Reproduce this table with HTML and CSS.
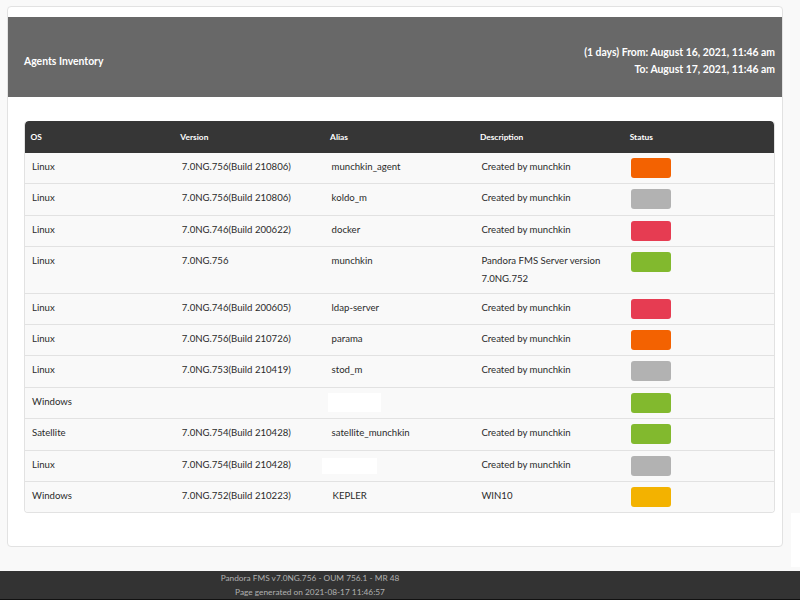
FILE: index.html
```html
<!DOCTYPE html>
<html>
<head>
<meta charset="utf-8">
<link rel="stylesheet" href="styles.css">
</head>
<body>
<div class="page">
  <div class="report">
    <div class="report-head">
      <div class="title">Agents Inventory</div>
      <div class="period">
        <div>(1 days) From: August 16, 2021, 11:46 am</div>
        <div>To: August 17, 2021, 11:46 am</div>
      </div>
    </div>
    <div class="table-area">
      <table class="inv">
        <thead>
          <tr><th>OS</th><th>Version</th><th>Alias</th><th>Description</th><th>Status</th></tr>
        </thead>
        <tbody>
          <tr><td>Linux</td><td>7.0NG.756(Build 210806)</td><td>munchkin_agent</td><td>Created by munchkin</td><td><span class="st orange"></span></td></tr>
          <tr><td>Linux</td><td>7.0NG.756(Build 210806)</td><td>koldo_m</td><td>Created by munchkin</td><td><span class="st gray"></span></td></tr>
          <tr><td>Linux</td><td>7.0NG.746(Build 200622)</td><td>docker</td><td>Created by munchkin</td><td><span class="st red"></span></td></tr>
          <tr><td>Linux</td><td>7.0NG.756</td><td>munchkin</td><td>Pandora FMS Server version 7.0NG.752</td><td><span class="st green"></span></td></tr>
          <tr><td>Linux</td><td>7.0NG.746(Build 200605)</td><td>ldap-server</td><td>Created by munchkin</td><td><span class="st red"></span></td></tr>
          <tr><td>Linux</td><td>7.0NG.756(Build 210726)</td><td>parama</td><td>Created by munchkin</td><td><span class="st orange"></span></td></tr>
          <tr><td>Linux</td><td>7.0NG.753(Build 210419)</td><td>stod_m</td><td>Created by munchkin</td><td><span class="st gray"></span></td></tr>
          <tr><td>Windows</td><td></td><td><span class="redact r1"></span></td><td></td><td><span class="st green"></span></td></tr>
          <tr><td>Satellite</td><td>7.0NG.754(Build 210428)</td><td>satellite_munchkin</td><td>Created by munchkin</td><td><span class="st green"></span></td></tr>
          <tr><td>Linux</td><td>7.0NG.754(Build 210428)</td><td><span class="redact r2"></span></td><td>Created by munchkin</td><td><span class="st gray"></span></td></tr>
          <tr><td>Windows</td><td>7.0NG.752(Build 210223)</td><td><span class="alias-kepler">KEPLER</span></td><td>WIN10</td><td><span class="st yellow"></span></td></tr>
        </tbody>
      </table>
    </div>
  </div>
  <footer class="foot">
    <div>Pandora FMS v7.0NG.756 - OUM 756.1 - MR 48</div>
    <div>Page generated on 2021-08-17 11:46:57</div>
  </footer>
  <div class="side-patch"></div>
</div>
</body>
</html>
```

FILE: styles.css
```css
html, body {
  margin: 0;
  padding: 0;
}
body {
  background: #f9f9f9;
  font-family: Lato, "Open Sans", "Liberation Sans", sans-serif;
  color: #2b2b2b;
}
.page {
  position: relative;
  min-height: 600px;
  display: flex;
  flex-direction: column;
  padding: 6px 17px 0 7px;
  box-sizing: border-box;
}
.report {
  background: #fff;
  border: 1px solid #e2e2e2;
  border-radius: 4px;
  padding-top: 10px;
  padding-bottom: 33px;
}
.report-head {
  background: #686868;
  height: 80px;
  box-sizing: border-box;
  padding: 8px 7px 0 16px;
  display: flex;
  align-items: center;
  justify-content: space-between;
  color: #fff;
  font-weight: 700;
  font-size: 10.4px;
}
.period {
  text-align: right;
  line-height: 17px;
}
.table-area {
  padding: 24px 7px 0 16px;
}
.inv {
  width: 100%;
  table-layout: fixed;
  border-collapse: separate;
  border-spacing: 0;
  border: 1px solid #e2e2e2;
  border-top: none;
  border-radius: 4px;
  overflow: hidden;
  font-size: 9.6px;
}
.inv th {
  background: #363636;
  color: #fff;
  font-weight: 700;
  font-size: 8.4px;
  text-align: left;
  height: 32px;
  padding: 0 5px 0 5.5px;
  box-sizing: border-box;
}
.inv thead th:first-child { border-top-left-radius: 4px; }
.inv thead th:last-child { border-top-right-radius: 4px; }
.inv td {
  background: #f9f9f9;
  vertical-align: top;
  padding: 5px 7px 5.4px;
  line-height: 17.5px;
  border-bottom: 1px solid #e2e2e2;
}
.inv tbody tr:last-child td {
  border-bottom: none;
}
.st {
  display: block;
  width: 40px;
  height: 20px;
  border-radius: 3px;
}
.orange { background: #f36201; }
.gray { background: #b2b2b2; }
.red { background: #e63c52; }
.green { background: #82b92e; }
.yellow { background: #f3b200; }
.redact {
  display: block;
  background: #fff;
}
.r1 {
  width: 53px;
  height: 19px;
  margin-left: -4px;
}
.r2 {
  width: 55px;
  height: 16px;
  margin-left: -10px;
  margin-top: 2px;
}
.alias-kepler {
  margin-left: 1px;
}
.foot {
  margin-top: auto;
  margin-left: -7px;
  margin-right: -17px;
  background: #333;
  color: #b0b0b0;
  font-size: 8.3px;
  line-height: 14px;
  height: 29px;
  box-sizing: border-box;
  padding-right: 180px;
  text-align: center;
  border-bottom: 1px solid #111;
}
.side-patch {
  position: absolute;
  right: 0;
  top: 513px;
  width: 9px;
  height: 54px;
  background: #fff;
}
```
